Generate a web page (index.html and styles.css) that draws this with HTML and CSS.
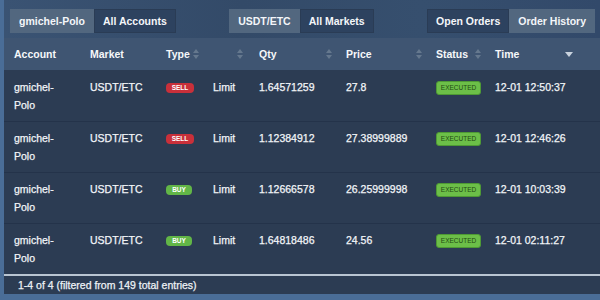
FILE: index.html
```html
<!DOCTYPE html>
<html>
<head>
<meta charset="utf-8">
<link rel="stylesheet" href="styles.css">
</head>
<body>
<div class="panel">
  <div class="toolbar">
    <div class="group">
      <span class="btn active">gmichel-Polo</span><span class="btn">All Accounts</span>
    </div>
    <div class="group">
      <span class="btn active">USDT/ETC</span><span class="btn">All Markets</span>
    </div>
    <div class="group">
      <span class="btn">Open Orders</span><span class="btn active">Order History</span>
    </div>
  </div>
  <table class="orders">
    <colgroup>
      <col class="c-acc"><col class="c-mkt"><col class="c-type"><col class="c-kind"><col class="c-qty"><col class="c-price"><col class="c-status"><col class="c-time">
    </colgroup>
    <thead>
      <tr>
        <th><div class="hcell">Account</div></th>
        <th><div class="hcell">Market</div></th>
        <th><div class="hcell">Type <span class="sort"><svg width="6" height="10" viewBox="0 0 6 10"><path d="M3 0L6 4H0z M3 10L0 6H6z" fill="#65788e"/></svg></span></div></th>
        <th><div class="hcell end"><span class="sort"><svg width="6" height="10" viewBox="0 0 6 10"><path d="M3 0L6 4H0z M3 10L0 6H6z" fill="#65788e"/></svg></span></div></th>
        <th><div class="hcell">Qty <span class="sort"><svg width="6" height="10" viewBox="0 0 6 10"><path d="M3 0L6 4H0z M3 10L0 6H6z" fill="#65788e"/></svg></span></div></th>
        <th><div class="hcell">Price <span class="sort"><svg width="6" height="10" viewBox="0 0 6 10"><path d="M3 0L6 4H0z M3 10L0 6H6z" fill="#65788e"/></svg></span></div></th>
        <th><div class="hcell">Status <span class="sort"><svg width="6" height="10" viewBox="0 0 6 10"><path d="M3 0L6 4H0z M3 10L0 6H6z" fill="#65788e"/></svg></span></div></th>
        <th><div class="hcell time">Time <span class="sort"><svg width="8" height="5" viewBox="0 0 8 5"><path d="M0 0H8L4 5z" fill="#c9d3de"/></svg></span></div></th>
      </tr>
    </thead>
    <tbody>
      <tr>
        <td>gmichel-Polo</td><td>USDT/ETC</td><td><span class="side sell">SELL</span></td><td>Limit</td><td>1.64571259</td><td>27.8</td><td><span class="status">EXECUTED</span></td><td>12-01 12:50:37</td>
      </tr>
      <tr>
        <td>gmichel-Polo</td><td>USDT/ETC</td><td><span class="side sell">SELL</span></td><td>Limit</td><td>1.12384912</td><td>27.38999889</td><td><span class="status">EXECUTED</span></td><td>12-01 12:46:26</td>
      </tr>
      <tr>
        <td>gmichel-Polo</td><td>USDT/ETC</td><td><span class="side buy">BUY</span></td><td>Limit</td><td>1.12666578</td><td>26.25999998</td><td><span class="status">EXECUTED</span></td><td>12-01 10:03:39</td>
      </tr>
      <tr>
        <td>gmichel-Polo</td><td>USDT/ETC</td><td><span class="side buy">BUY</span></td><td>Limit</td><td>1.64818486</td><td>24.56</td><td><span class="status">EXECUTED</span></td><td>12-01 02:11:27</td>
      </tr>
    </tbody>
  </table>
  <div class="footer">1-4 of 4 (filtered from 149 total entries)</div>
</div>
</body>
</html>
```

FILE: styles.css
```css
html, body {
  margin: 0;
  padding: 0;
}
body {
  width: 600px;
  height: 300px;
  overflow: hidden;
  background: #4a6d97;
  font-family: "Liberation Sans", Arial, sans-serif;
  font-size: 10.5px;
  color: #f2f5f8;
}
.panel {
  margin-left: 4px;
  width: 596px;
  background: #2c3c53;
}
.toolbar {
  display: flex;
  justify-content: space-between;
  padding: 9px 5px 5px 6px;
  background: linear-gradient(90deg, #3a5373 0%, #334a68 40%, #364f6e 70%, #32496a 100%);
}
.group {
  display: flex;
}
.btn {
  display: block;
  height: 24px;
  line-height: 24px;
  padding: 0 9px;
  font-weight: bold;
  color: #f4f6f9;
  background: #2d425f;
  box-shadow: inset 0 0 0 1px #2a3c55;
}
.btn.active {
  background: #52677f;
  box-shadow: none;
}
.orders {
  width: 596px;
  table-layout: fixed;
  border-collapse: collapse;
}
.c-acc { width: 76px; }
.c-mkt { width: 76px; }
.c-type { width: 47px; }
.c-kind { width: 46px; }
.c-qty { width: 87px; }
.c-price { width: 90px; }
.c-status { width: 59px; }
.c-time { width: 115px; }
.orders thead th {
  height: 32px;
  padding: 0;
  background: #3f5572;
  text-align: left;
  font-weight: bold;
  color: #f6f8fa;
}
.hcell {
  display: flex;
  align-items: center;
  justify-content: space-between;
  padding: 0 4px 0 10px;
}
.hcell.end {
  justify-content: flex-end;
  padding-right: 6px;
}
.hcell.time {
  padding-right: 27px;
}
.sort {
  display: flex;
  align-items: center;
}
.orders tbody td {
  padding: 7px 10px 7px 10px;
  vertical-align: top;
  line-height: 18px;
  border-top: 1px solid #24334a;
  -webkit-text-stroke: 0.25px #f2f5f8;
}
.orders tbody tr:first-child td {
  border-top: none;
  padding-top: 8px;
}
.orders tbody td:first-child {
  padding-right: 12px;
}
.side {
  display: inline-block;
  vertical-align: 1px;
  height: 10px;
  line-height: 10px;
  padding: 0 5px;
  border-radius: 4px;
  font-size: 6.5px;
  font-weight: bold;
  color: #ffffff;
  -webkit-text-stroke: 0;
}
.sell {
  width: 18px;
  text-align: center;
  background: #c9303a;
}
.buy {
  width: 16px;
  text-align: center;
  background: #62b647;
}
.status {
  display: inline-block;
  vertical-align: middle;
  box-sizing: border-box;
  width: 45px;
  height: 14px;
  line-height: 12px;
  text-align: center;
  font-size: 6.5px;
  color: #234a12;
  background: #6cbf48;
  border: 1px solid #4e9a34;
  border-radius: 3px;
  -webkit-text-stroke: 0;
}
.footer {
  border-top: 2px solid #b9c5d2;
  height: 18px;
  line-height: 18px;
  padding-left: 14px;
  color: #eef2f6;
  -webkit-text-stroke: 0.25px #eef2f6;
}
```
